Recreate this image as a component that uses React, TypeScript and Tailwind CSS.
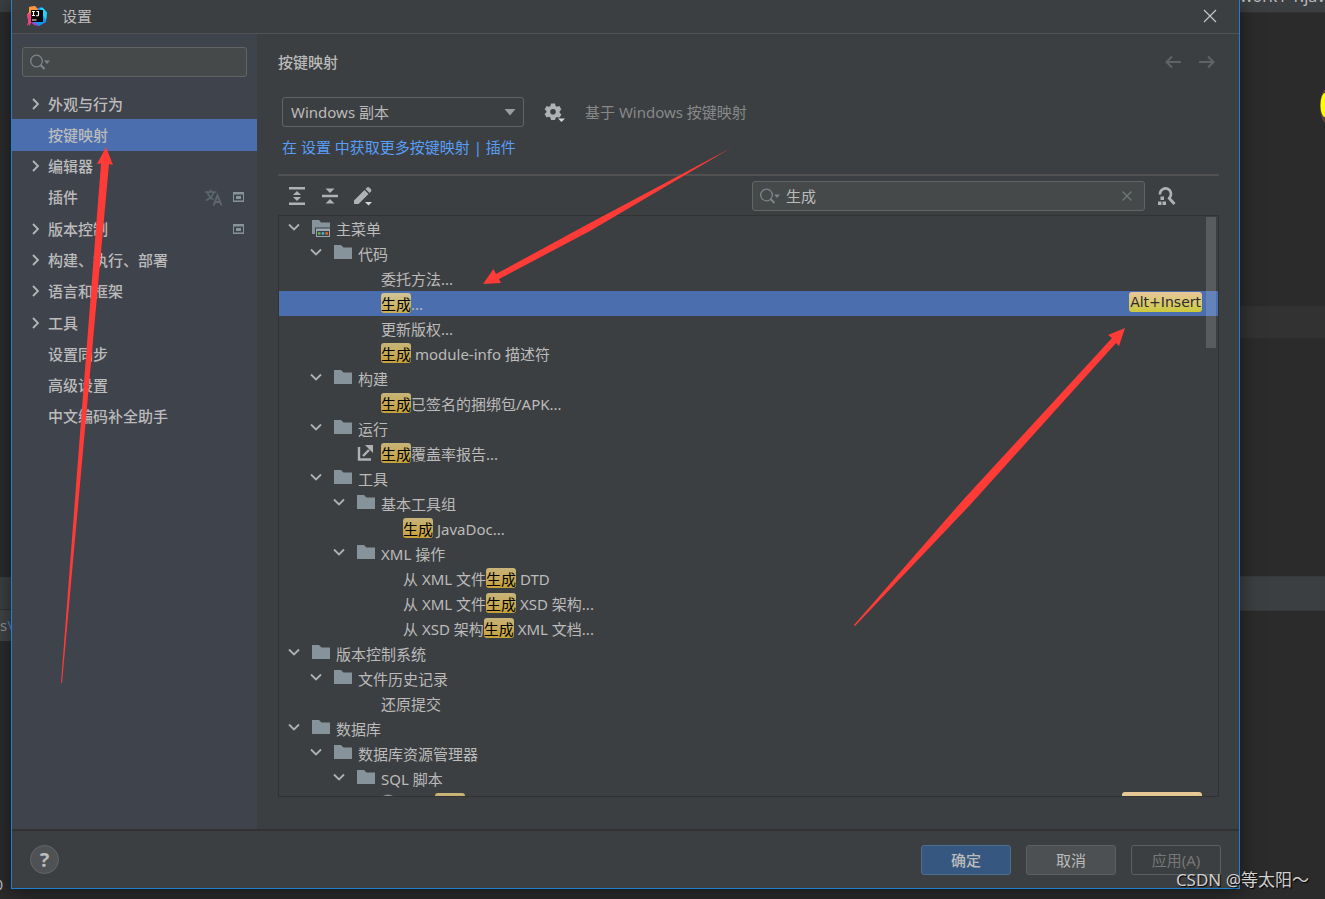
import { useState } from "react";
import type { ReactNode } from "react";

type NavItem = { label: string; expandable?: boolean; translated?: boolean; project?: boolean };

const navItems: NavItem[] = [
  { label: "外观与行为", expandable: true },
  { label: "按键映射" },
  { label: "编辑器", expandable: true },
  { label: "插件", translated: true, project: true },
  { label: "版本控制", expandable: true, project: true },
  { label: "构建、执行、部署", expandable: true },
  { label: "语言和框架", expandable: true },
  { label: "工具", expandable: true },
  { label: "设置同步" },
  { label: "高级设置" },
  { label: "中文编码补全助手" },
];

type TreeRow = {
  level: 0 | 1 | 2 | 3;
  text: string;
  icon?: "menu" | "folder" | "export" | "sql";
  shortcut?: string;
};

const treeRows: TreeRow[] = [
  { level: 0, icon: "menu", text: "主菜单" },
  { level: 1, icon: "folder", text: "代码" },
  { level: 2, text: "委托方法..." },
  { level: 2, text: "生成...", shortcut: "Alt+Insert" },
  { level: 2, text: "更新版权..." },
  { level: 2, text: "生成 module-info 描述符" },
  { level: 1, icon: "folder", text: "构建" },
  { level: 2, text: "生成已签名的捆绑包/APK..." },
  { level: 1, icon: "folder", text: "运行" },
  { level: 2, icon: "export", text: "生成覆盖率报告..." },
  { level: 1, icon: "folder", text: "工具" },
  { level: 2, icon: "folder", text: "基本工具组" },
  { level: 3, text: "生成 JavaDoc..." },
  { level: 2, icon: "folder", text: "XML 操作" },
  { level: 3, text: "从 XML 文件生成 DTD" },
  { level: 3, text: "从 XML 文件生成 XSD 架构..." },
  { level: 3, text: "从 XSD 架构生成 XML 文档..." },
  { level: 0, icon: "folder", text: "版本控制系统" },
  { level: 1, icon: "folder", text: "文件历史记录" },
  { level: 2, text: "还原提交" },
  { level: 0, icon: "folder", text: "数据库" },
  { level: 1, icon: "folder", text: "数据库资源管理器" },
  { level: 2, icon: "folder", text: "SQL 脚本" },
  { level: 3, icon: "sql", text: "SQL 生成器...", shortcut: "Ctrl+Alt+G" },
];

const indents = ["pl-[9px]", "pl-[31px]", "pl-[54px]", "pl-[76px]"];

function Logo() {
  return (
    <svg width="20" height="20" viewBox="0 0 20 20" aria-hidden="true">
      <path d="M2 1 8 0l5 4-2 14-7-2-4 4 2-7-2-3 2-3z" fill="#f5446b" />
      <path d="M2 1 8 0l3 4-8 6-3-1 2-3z" fill="#fc9a3a" />
      <path d="M0 9l4-3 2 8-4 6z" fill="#ef3f7e" />
      <path d="M11 2l4-1 5 5-1 10-7 4-7-3 6-3z" fill="#1295f0" />
      <path d="M13 2l3 0 4 5-1 7-4-6z" fill="#25d4f2" />
      <path d="M4 16l5 1 3 3-5-1z" fill="#a044c8" />
      <rect x="4" y="4" width="12" height="12" fill="#0a0509" />
      <path d="M5 5.500h3M6.500 5.500v4M5 9.500h3M9.500 5.500h2v3.500q0 .7-.8.7H9M5 14h4.500" stroke="#fff" strokeWidth="1.100" fill="none" />
    </svg>
  );
}

function SearchIcon() {
  return (
    <svg width="22" height="18" viewBox="0 0 22 18" fill="none" aria-hidden="true">
      <circle cx="6.500" cy="8" r="5.800" stroke="#7d868c" strokeWidth="1.300" />
      <path d="M10.500 12l4 4" stroke="#7d868c" strokeWidth="2" />
      <path d="M14 7.500h6l-3 3.500z" fill="#7d868c" />
    </svg>
  );
}

function ChevronRight() {
  return (
    <svg width="8" height="12" viewBox="0 0 8 12" fill="none" aria-hidden="true">
      <path d="M1 1l5 5-5 5" stroke="#b3b6b9" strokeWidth="1.800" />
    </svg>
  );
}

function ChevronDown() {
  return (
    <svg width="12" height="8" viewBox="0 0 12 8" fill="none" aria-hidden="true">
      <path d="M1 1.500l5 5 5-5" stroke="#afb1b3" strokeWidth="1.800" />
    </svg>
  );
}

function TranslateIcon() {
  return (
    <svg width="18" height="17" viewBox="0 0 18 17" fill="none" stroke="#5d6770" strokeWidth="1.700" aria-hidden="true">
      <path d="M0 3h11.500M5.700.5V3M9 3Q7 9 .8 11.500M2.500 3.500Q4 8.500 8.500 10.500" />
      <path d="M8.500 16.500l4-10 4 10M10 13h5.500" strokeWidth="2" />
    </svg>
  );
}

function ProjectIcon() {
  return (
    <svg width="11" height="10" viewBox="0 0 11 10" aria-hidden="true">
      <path fillRule="evenodd" d="M0 0h11v10H0zM1 2.500v6h9v-6z" fill="#87939a" />
      <rect x="3" y="4" width="5" height="3" fill="#87939a" />
    </svg>
  );
}

function RowIcon({ icon }: { icon: TreeRow["icon"] }) {
  if (icon === "export") {
    return (
      <svg width="18" height="18" viewBox="0 0 18 18" fill="none" aria-hidden="true">
        <path d="M2 3v12.500H14" stroke="#afb1b3" strokeWidth="2.400" />
        <path d="M6 12l6-6" stroke="#afb1b3" strokeWidth="2.400" />
        <path d="M8 1H16v8z" fill="#afb1b3" />
      </svg>
    );
  }
  if (icon === "sql") {
    return (
      <svg width="18" height="18" viewBox="0 0 18 18" aria-hidden="true">
        <circle cx="9" cy="9" r="8.500" fill="#87939a" />
      </svg>
    );
  }
  return (
    <svg width="18" height="18" viewBox="0 0 18 18" aria-hidden="true">
      {icon === "menu" ? (
        <>
          <path d="M0 1h7l2 2.500h9V8.500H3V15H0z" fill="#87939a" />
          <path fillRule="evenodd" d="M4 9.500h14V18H4zM5 12v5h12v-5z" fill="#9aa7b0" />
          <path d="M6 13.200h2.500v2.500H6z" fill="#62b543" />
          <path d="M9.700 13.200h2.500v2.500H9.700z" fill="#40b6e0" />
          <path d="M13.400 13.200h2.500v2.500h-2.500z" fill="#f26522" />
        </>
      ) : (
        <path d="M0 1h7l2.500 2.500H18V15H0z" fill="#87939a" />
      )}
    </svg>
  );
}

// Marks every occurrence of the query inside a row
function highlight(text: string, query: string, selected: boolean): ReactNode {
  if (!query) return text;
  return text.split(query).map((part, i) => (
    <span key={i}>
      {i > 0 && (
        <mark
          className={`inline-block h-5 rounded-[3px] bg-linear-to-b leading-[22px] text-black ${
            selected ? "from-[#d0c596] to-[#c9ac50]" : "from-[#c8b479] to-[#c6a136]"
          }`}
        >
          {query}
        </mark>
      )}
      {part}
    </span>
  ));
}

function Sidebar() {
  const [active, setActive] = useState("按键映射");

  return (
    <aside className="flex w-[245px] shrink-0 flex-col bg-[#3f434c]">
      <label className="mx-2.5 mt-[13px] flex h-[30px] items-center rounded-[3px] border border-[#646464] bg-[#45494a] pl-[7px]">
        <SearchIcon />
        <input type="text" aria-label="搜索设置" className="min-w-0 flex-1 bg-transparent px-2 outline-none" />
      </label>
      <nav className="mt-[11px] grid h-[344px] grid-rows-11">
        {navItems.map((item) => (
          <button
            key={item.label}
            onClick={() => setActive(item.label)}
            className={`flex items-center pr-[13px] pl-5 text-left font-medium ${
              active === item.label ? "bg-[#4b6eaf]" : ""
            }`}
          >
            <span className="w-4 shrink-0">{item.expandable && <ChevronRight />}</span>
            <span className="flex-1">{item.label}</span>
            <span className="flex items-center gap-2.5">
              {item.translated && <TranslateIcon />}
              {item.project && <ProjectIcon />}
            </span>
          </button>
        ))}
      </nav>
    </aside>
  );
}

function KeymapTree({ query }: { query: string }) {
  const [selected, setSelected] = useState(3);

  return (
    <div className="relative min-h-0 flex-1 overflow-hidden border border-[#323232]">
      <ul role="tree" aria-label="按键映射">
        {treeRows.map((row, i) => (
          <li
            key={i}
            role="treeitem"
            aria-selected={selected === i}
            onClick={() => setSelected(i)}
            className={`flex h-[25px] items-center pr-4 whitespace-pre ${indents[row.level]} ${
              selected === i ? "bg-[#4b6eaf]" : ""
            }`}
          >
            <span className="w-6 shrink-0 pb-1">
              {(row.icon === "menu" || row.icon === "folder") && <ChevronDown />}
            </span>
            <span className="w-6 shrink-0 pb-0.5">{row.icon && <RowIcon icon={row.icon} />}</span>
            <span className="flex-1 leading-[22px]">{highlight(row.text, query, selected === i)}</span>
            {row.shortcut && (
              <kbd className="mb-1 h-5 rounded-[3px] bg-linear-to-b from-[#e9c79b] to-[#cbc936] px-px font-['DejaVu_Sans',sans-serif] text-sm leading-5 text-[#2b2b2b]">
                {row.shortcut}
              </kbd>
            )}
          </li>
        ))}
      </ul>
      <div className="absolute top-px right-0.5 h-[131px] w-2.5 bg-white/15" />
    </div>
  );
}

function KeymapPanel() {
  const [query, setQuery] = useState("生成");

  return (
    <main className="flex min-w-0 flex-1 flex-col pr-5 pb-8 pl-[21px]">
      <div className="mt-4 flex h-6 items-center justify-between">
        <h1 className="font-medium">按键映射</h1>
        <div className="flex gap-4 pr-[3px]">
          <button aria-label="后退">
            <svg width="18" height="14" viewBox="0 0 18 14" fill="none" stroke="#606364" strokeWidth="2">
              <path d="M17 7H2M8 1.500L2.500 7 8 12.500" />
            </svg>
          </button>
          <button aria-label="前进">
            <svg width="18" height="14" viewBox="0 0 18 14" fill="none" stroke="#606364" strokeWidth="2">
              <path d="M1 7h15M10 1.500L15.500 7 10 12.500" />
            </svg>
          </button>
        </div>
      </div>

      <div className="mt-[23px] flex h-[30px] items-center pl-1">
        <div className="relative">
          <select
            aria-label="按键映射方案"
            className="h-[30px] w-[242px] appearance-none rounded-[3px] border border-[#646464] bg-[#3c3f41] px-2 outline-none"
          >
            <option>Windows 副本</option>
          </select>
          <svg className="pointer-events-none absolute top-3 right-2" width="12" height="7" viewBox="0 0 12 7" aria-hidden="true">
            <path d="M.5 0h11L6 6.500z" fill="#9a9da0" />
          </svg>
        </div>
        <button aria-label="方案操作" className="ml-5">
          <svg width="22" height="22" viewBox="0 0 22 22" aria-hidden="true">
            <path
              fillRule="evenodd"
              fill="#afb1b3"
              d="M7 2.500h4l.6 2.400 1.400.8 2.400-.7 2 3.500-1.800 1.700v1.600l1.800 1.700-2 3.500-2.400-.7-1.400.8L11 19H7l-.6-2.400-1.400-.8-2.400.7-2-3.500 1.800-1.700V9.700L.6 8.500l2-3.500 2.400.7 1.400-.8zM9 8a2.800 2.800 0 1 0 0 5.600A2.800 2.800 0 0 0 9 8z"
            />
            <path d="M12 16.500h9.500l-4.500 5z" fill="#3c3f41" />
            <path d="M14 17.500h7L17.500 21z" fill="#d5d6d7" />
          </svg>
        </button>
        <span className="ml-[19px] text-[#87898a]">基于 Windows 按键映射</span>
      </div>

      <div className="mt-2 flex h-6 items-center pl-1 text-[#589df6]">
        <a href="#plugins">在 设置 中获取更多按键映射 | 插件</a>
      </div>

      <div className="mt-[15px] border-t-2 border-[#515151]" />

      <div className="flex h-[39px] items-center pl-2.5">
        <div className="flex items-center gap-[15px]">
          <button aria-label="全部展开">
            <svg width="18" height="20" viewBox="0 0 18 20" fill="#afb1b3" aria-hidden="true">
              <path d="M1 1h16v2.500H1zM1 16.500h16V19H1zM9 5l4 4H5zM9 15l4-4H5z" />
            </svg>
          </button>
          <button aria-label="全部折叠">
            <svg width="18" height="20" viewBox="0 0 18 20" fill="#afb1b3" aria-hidden="true">
              <path d="M1 8.800h16v2.400H1zM4.500 2.500h9L9 7zM4.500 17.500h9L9 13z" />
            </svg>
          </button>
          <button aria-label="编辑快捷键">
            <svg width="20" height="20" viewBox="0 0 20 20" fill="#afb1b3" aria-hidden="true">
              <path d="M0 14.500L10.500 4l4 4L4.500 18H0zM11.500 3L13 1.500q1-1 2.200 0L17 3.300q1 1 0 2.200L15.500 7z" />
              <path d="M9.500 14.500H19l-4.500 5z" fill="#3c3f41" />
              <path d="M11 16h7l-3.500 3.500z" fill="#d5d6d7" />
            </svg>
          </button>
        </div>
        <label className="ml-auto flex h-[30px] w-[393px] items-center rounded-[3px] border border-[#646464] bg-[#45494a] pr-3 pl-[7px]">
          <SearchIcon />
          <input
            type="text"
            aria-label="搜索操作"
            value={query}
            onChange={(e) => setQuery(e.target.value)}
            className="h-5 min-w-0 flex-1 bg-transparent px-1 outline-none"
          />
          <button aria-label="清除" onClick={() => setQuery("")}>
            <svg width="10" height="10" viewBox="0 0 10 10" stroke="#73777a" strokeWidth="1.200" aria-hidden="true">
              <path d="M.5.5l9 9M9.500.5l-9 9" />
            </svg>
          </button>
        </label>
        <button aria-label="按快捷键查找" className="mr-[42px] ml-3">
          <svg width="20" height="20" viewBox="0 0 20 20" fill="none" aria-hidden="true">
            <path d="M3 8.500V7.500a5.500 5.500 0 1 1 8.500 5" stroke="#afb1b3" strokeWidth="2.600" />
            <path d="M11.500 11.500l6 6.500" stroke="#afb1b3" strokeWidth="2.800" />
            <path d="M3.500 10.500H7V14H3.500zM1 15.500h3.500V19H1zM5.500 15.500H9V19H5.500z" fill="#afb1b3" />
          </svg>
        </button>
      </div>

      <KeymapTree query={query} />
    </main>
  );
}

function SettingsDialog() {
  return (
    <section
      role="dialog"
      aria-label="设置"
      className="relative z-10 mb-2.5 flex min-h-0 min-w-0 flex-1 flex-col border border-t-0 border-[#1f7fd0] bg-[#3c3f41] shadow-[0_2px_18px_rgba(0,0,0,0.5)]"
    >
      <header className="flex h-[34px] shrink-0 items-center border-b border-[#515354] pr-[22px] pb-0.5 pl-[15px]">
        <Logo />
        <span className="ml-[15px] flex-1">设置</span>
        <button aria-label="关闭">
          <svg width="14" height="14" viewBox="0 0 14 14" stroke="#c4c5c6" strokeWidth="1.200" aria-hidden="true">
            <path d="M1 1l12 12M13 1L1 13" />
          </svg>
        </button>
      </header>

      <div className="flex min-h-0 flex-1">
        <Sidebar />
        <KeymapPanel />
      </div>

      <footer className="flex h-[59px] shrink-0 items-center gap-[15px] border-t-2 border-[#323232] px-[18px]">
        <button
          aria-label="帮助"
          className="mr-auto size-[29px] rounded-full border border-[#646768] bg-[#4e5254] text-xl leading-none font-bold"
        >
          ?
        </button>
        <button className="h-[30px] w-[90px] rounded-[3px] border border-[#4c708c] bg-[#365880] font-medium">确定</button>
        <button className="h-[30px] w-[90px] rounded-[3px] border border-[#5e6060] bg-[#4c5052]">取消</button>
        <button disabled className="h-[30px] w-[90px] rounded-[3px] border border-[#5e6060] text-[#777777]">
          应用(A)
        </button>
      </footer>
    </section>
  );
}

// Slivers of the IDE window left uncovered by the dialog
function EditorLeft() {
  return (
    <div className="w-[11px] shrink-0 overflow-hidden whitespace-nowrap">
      <div className="h-3 bg-[#3c3f41]" />
      <div className="h-[565px]" />
      <div className="h-[33px] border-b border-[#323232] bg-[#3c3f41]" />
      <div className="h-[31px] bg-[#414344] leading-[30px] text-[#8f8f8f]">
        s<span className="text-[#4a86c8]">\</span>
      </div>
      <div className="flex h-[253px] items-end justify-end pr-2 text-[#c0c0c0]">0</div>
    </div>
  );
}

function EditorRight() {
  return (
    <div className="w-[85px] shrink-0 overflow-hidden whitespace-nowrap">
      <div className="flex h-3 items-end overflow-hidden bg-[#3c3f41] pb-1.5 text-base leading-5">work1 1.java</div>
      <div className="flex h-[294px] justify-end border-t border-[#323232]">
        <svg className="mt-[74px]" width="7" height="40" viewBox="0 0 7 40" aria-hidden="true">
          <ellipse cx="11" cy="19" rx="9" ry="19" fill="#5d463b" />
          <ellipse cx="7" cy="18" rx="4.500" ry="12" fill="#ffff00" />
        </svg>
      </div>
      <div className="h-8 bg-[#323232]" />
      <div className="h-[238px]" />
      <div className="h-[35px] border-y border-[#383838] bg-[#3c3f41]" />
    </div>
  );
}

export default function App() {
  return (
    <div className="relative flex h-screen overflow-hidden bg-[#2b2b2b] font-['Noto_Sans','Noto_Sans_CJK_SC',sans-serif] text-[15px] leading-5 text-[#bbbbbb]">
      <EditorLeft />
      <SettingsDialog />
      <EditorRight />

      {/* Hand-drawn arrows over the dialog */}
      <svg className="pointer-events-none absolute top-0 left-0 z-20" width="1200" height="700" viewBox="0 0 1200 700" fill="#ff3b38" aria-hidden="true">
        <path d="M106 147L113 165 109 164 84 440 62 683H61L79.500 440 101 163.500 97 164z" />
        <path d="M483 284L493.500 269 496 274 590 223 731 148 590 231 499 279 501 283z" />
        <path d="M1125 328L1119 346 1116 343 970 505 855 626 854 625 963 500 1112 338 1108 335z" />
      </svg>
      <span className="absolute right-4 bottom-[7px] z-30 text-[17px] leading-6 text-[#d0d0d0] [text-shadow:1px_1px_1px_#000]">
        CSDN @等太阳～
      </span>
    </div>
  );
}
